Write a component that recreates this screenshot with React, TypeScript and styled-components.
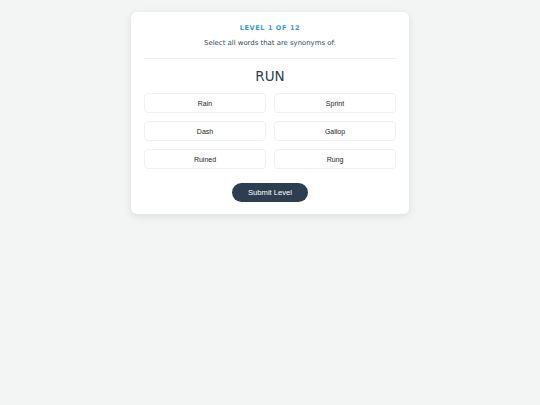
import React, { FC } from 'react';
import styled, { createGlobalStyle } from 'styled-components';

const GlobalStyle = createGlobalStyle`
  html, body {
    margin: 0;
    padding: 0;
    background: #f3f5f4;
  }
  body {
    font-family: 'DejaVu Sans', Verdana, sans-serif;
  }
`;

const Page = styled.div`
  width: 540px;
  min-height: 405px;
  display: flex;
  justify-content: center;
  align-items: flex-start;
  padding-top: 12px;
  box-sizing: border-box;
`;

const Card = styled.div`
  width: 278px;
  box-sizing: border-box;
  background: #ffffff;
  border-radius: 6px;
  box-shadow: 0 2px 8px rgba(0, 0, 0, 0.1);
  padding: 11px 13px 12px;
  display: flex;
  flex-direction: column;
  align-items: center;
`;

const Level = styled.div`
  font-size: 6.5px;
  font-weight: bold;
  letter-spacing: 0.6px;
  color: #3498db;
  line-height: 10px;
`;

const Prompt = styled.div`
  font-size: 6.9px;
  color: #34495e;
  line-height: 10px;
  margin-top: 5px;
`;

const Divider = styled.hr`
  width: 100%;
  border: none;
  border-top: 1px solid #eef0f0;
  margin: 10px 0 0;
`;

const Word = styled.div`
  font-size: 13.5px;
  color: #2c3e50;
  line-height: 18px;
  margin-top: 8px;
`;

const Grid = styled.div`
  width: 100%;
  display: grid;
  grid-template-columns: 1fr 1fr;
  gap: 8px;
  margin-top: 8px;
`;

const Option = styled.button`
  height: 20px;
  background: #ffffff;
  border: 1px solid #eff1f1;
  border-radius: 4px;
  font-family: 'Liberation Sans', Arial, sans-serif;
  font-size: 7px;
  color: #1e1e1e;
  padding: 0;
`;

const Submit = styled.button`
  margin-top: 14px;
  width: 76px;
  height: 19px;
  border: none;
  border-radius: 10px;
  background: #2c3e50;
  color: #ffffff;
  font-family: 'Liberation Sans', Arial, sans-serif;
  font-size: 7.6px;
  padding: 0;
`;

const options = ['Rain', 'Sprint', 'Dash', 'Gallop', 'Ruined', 'Rung'];

const App: FC = () => (
  <>
    <GlobalStyle />
    <Page>
      <Card>
        <Level>LEVEL 1 OF 12</Level>
        <Prompt>Select all words that are synonyms of:</Prompt>
        <Divider />
        <Word>RUN</Word>
        <Grid>
          {options.map((o) => (
            <Option key={o}>{o}</Option>
          ))}
        </Grid>
        <Submit>Submit Level</Submit>
      </Card>
    </Page>
  </>
);

export default App;
